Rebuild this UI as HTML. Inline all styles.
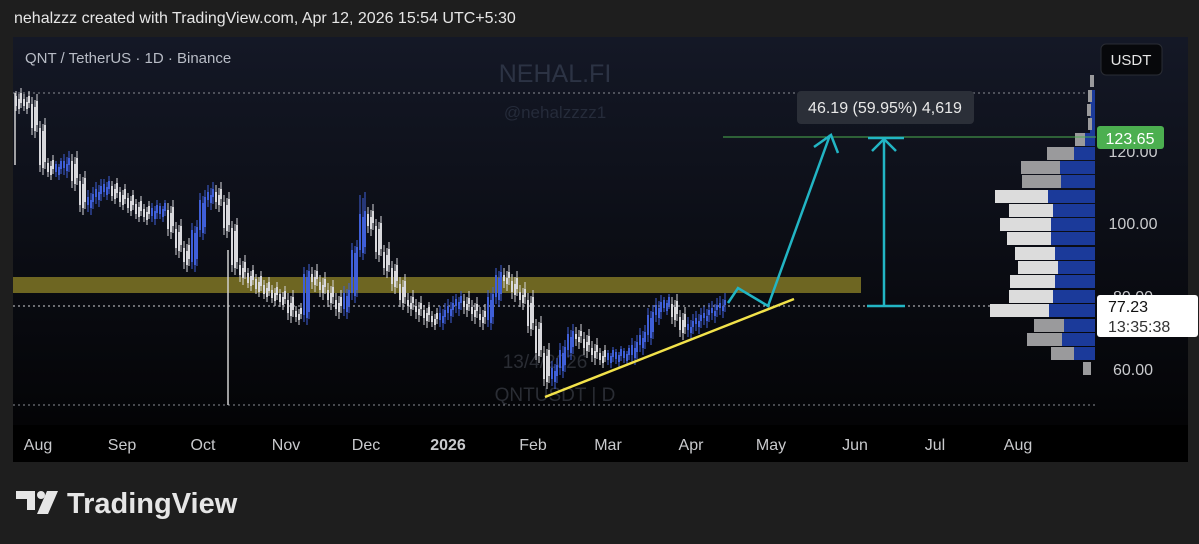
<!DOCTYPE html>
<html><head><meta charset="utf-8"><style>
html,body{margin:0;padding:0;background:#1e1e1e;width:1199px;height:544px;overflow:hidden;font-family:"Liberation Sans",sans-serif}
.hdr{position:absolute;left:14px;top:10px;color:#e6e6e6;font-size:16px;z-index:2}
svg{position:absolute;left:0;top:0}
</style></head><body>
<svg width="1199" height="544" xmlns="http://www.w3.org/2000/svg" xmlns:xlink="http://www.w3.org/1999/xlink">
<defs><linearGradient id="g" x1="0" y1="0" x2="0" y2="1"><stop offset="0" stop-color="#141826"/><stop offset="1" stop-color="#020203"/></linearGradient></defs>
<rect x="13" y="37" width="1175" height="425" fill="url(#g)"/>
<rect x="13" y="425" width="1175" height="37" fill="#000"/>
<text x="25" y="63" fill="#b8bcc6" font-size="15">QNT / TetherUS · 1D · Binance</text>
<text x="555" y="82" fill="#2c3344" font-size="25" text-anchor="middle">NEHAL.FI</text>
<text x="555" y="118" fill="#252b3a" font-size="17" text-anchor="middle">@nehalzzzz1</text>
<text x="545" y="368" fill="#2a2d34" font-size="19" text-anchor="middle">13/4/2026</text>
<text x="555" y="401" fill="#2a2d34" font-size="19" text-anchor="middle">QNTUSDT | D</text>
<line x1="13" y1="93" x2="1096" y2="93" stroke="#8a8d94" stroke-width="1" stroke-dasharray="2,3"/>
<line x1="13" y1="405" x2="1096" y2="405" stroke="#8a8d94" stroke-width="1" stroke-dasharray="2,3"/>
<line x1="13" y1="306" x2="1096" y2="306" stroke="#cfd0d4" stroke-width="1" stroke-dasharray="2,3"/>
<rect x="13" y="277" width="848" height="16" fill="#6e6622"/>
<line x1="228" y1="250" x2="228" y2="405" stroke="#d0d0d0" stroke-width="1.5"/>
<line x1="15" y1="93" x2="15" y2="165" stroke="#d0d0d0" stroke-width="1.5"/>
<g id="cd">
<path fill="none" stroke="#d8d8dc" stroke-width="1" d="M16 91V111 M24 94V111 M32 97V135 M40 121V172 M48 158V177 M72 154V188 M80 174V212 M112 181V201 M120 187V207 M128 193V213 M136 199V219 M144 204V222 M168 203V236 M176 222V255 M184 241V269 M216 185V209 M224 195V235 M232 221V272 M240 258V282 M248 268V288 M256 274V294 M264 280V299 M272 285V303 M280 289V307 M288 293V320 M296 306V322 M312 267V289 M320 275V297 M328 283V307 M336 293V316 M368 207V233 M376 219V259 M384 245V275 M392 261V291 M400 277V307 M408 293V313 M416 299V319 M424 305V325 M432 311V327 M464 294V314 M472 300V321 M480 307V327 M504 268V288 M512 274V299 M520 285V307 M528 293V333 M536 319V360 M544 346V386 M576 327V346 M584 332V355 M592 341V362 M600 348V365 M672 297V324 M680 310V337"/>
<path fill="none" stroke="#d8d8dc" stroke-width="2" d="M16 96V106 M24 99V106 M32 104V128 M40 128V165 M48 163V172 M72 161V181 M80 181V205 M112 186V196 M120 192V202 M128 198V208 M136 204V214 M144 209V217 M168 210V229 M176 229V248 M184 248V262 M216 192V202 M224 202V228 M232 228V265 M240 265V275 M248 273V283 M256 279V289 M264 285V294 M272 290V298 M280 294V302 M288 300V313 M296 311V317 M312 274V282 M320 282V290 M328 290V300 M336 300V309 M368 214V226 M376 226V252 M384 252V268 M392 268V284 M400 284V300 M408 300V306 M416 306V312 M424 310V318 M432 316V322 M464 301V307 M472 307V314 M480 314V320 M504 275V281 M512 281V292 M520 292V300 M528 300V326 M536 326V353 M544 353V379 M576 334V339 M584 339V348 M592 348V355 M600 353V360 M672 304V317 M680 317V330"/>
<path fill="none" stroke="#3f5fd8" stroke-width="1" d="M56 161V177 M64 154V175 M88 190V212 M96 182V204 M104 179V197 M152 203V222 M160 203V219 M192 223V269 M200 193V237 M208 185V207 M304 267V322 M344 286V316 M352 243V300 M360 195V257 M440 306V327 M448 299V320 M456 294V313 M488 290V327 M496 268V304 M552 361V386 M560 343V375 M568 327V357 M608 350V365 M616 349V364 M624 348V363 M632 338V362 M640 328V352 M648 308V342 M656 298V322 M664 297V312 M688 317V337 M696 311V331 M704 306V325 M712 301V320 M720 296V315"/>
<path fill="none" stroke="#3f5fd8" stroke-width="2" d="M56 164V172 M64 161V168 M88 197V205 M96 189V197 M104 184V192 M152 208V216 M160 206V214 M192 230V262 M200 200V230 M208 192V200 M304 274V315 M344 293V309 M352 250V293 M360 214V250 M440 313V320 M448 306V313 M456 299V306 M488 297V320 M496 275V297 M552 368V379 M560 350V368 M568 334V350 M608 353V360 M616 352V359 M624 351V358 M632 345V355 M640 335V345 M648 315V335 M656 305V315 M664 300V308 M688 324V330 M696 318V324 M704 313V318 M712 308V313 M720 303V308"/>
</g>
<use xlink:href="#cd" href="#cd" transform="translate(3,3)"/>
<use xlink:href="#cd" href="#cd" transform="translate(5,-3)"/>
<rect x="1090" y="90" width="5" height="50" fill="#1b3a9a"/>
<g fill="#1b3a9a">
<rect x="1074" y="147" width="21" height="13"/><rect x="1060" y="161" width="35" height="13"/><rect x="1061" y="175" width="34" height="13"/><rect x="1048" y="190" width="47" height="13"/><rect x="1053" y="204" width="42" height="13"/><rect x="1051" y="218" width="44" height="13"/><rect x="1051" y="232" width="44" height="13"/><rect x="1055" y="247" width="40" height="13"/><rect x="1058" y="261" width="37" height="13"/><rect x="1055" y="275" width="40" height="13"/><rect x="1053" y="290" width="42" height="13"/><rect x="1049" y="304" width="46" height="13"/><rect x="1064" y="319" width="31" height="13"/><rect x="1062" y="333" width="33" height="13"/><rect x="1074" y="347" width="21" height="13"/><rect x="1085" y="133" width="10" height="13"/></g>
<g fill="#9a9a9c">
<rect x="1075" y="133" width="10" height="13"/><rect x="1047" y="147" width="27" height="13"/><rect x="1021" y="161" width="39" height="13"/><rect x="1022" y="175" width="39" height="13"/><rect x="1034" y="319" width="30" height="13"/><rect x="1027" y="333" width="35" height="13"/><rect x="1051" y="347" width="23" height="13"/><rect x="1083" y="362" width="8" height="13"/>
<rect x="1090" y="75" width="4" height="12"/><rect x="1088" y="90" width="4" height="12"/><rect x="1087" y="104" width="4" height="12"/><rect x="1088" y="118" width="4" height="12"/></g>
<g fill="#dcdcdc">
<rect x="995" y="190" width="53" height="13"/><rect x="1009" y="204" width="44" height="13"/><rect x="1000" y="218" width="51" height="13"/><rect x="1007" y="232" width="44" height="13"/><rect x="1015" y="247" width="40" height="13"/><rect x="1018" y="261" width="40" height="13"/><rect x="1010" y="275" width="45" height="13"/><rect x="1009" y="290" width="44" height="13"/><rect x="990" y="304" width="59" height="13"/></g>
<line x1="723" y1="137" x2="1096" y2="137" stroke="#4caf50" stroke-width="1"/>
<polyline points="728,303 738,288 768,306 830,135" fill="none" stroke="#22b5c4" stroke-width="2.5"/>
<polyline points="814,147 831,135 838,153" fill="none" stroke="#22b5c4" stroke-width="2.5"/>
<line x1="884" y1="139" x2="884" y2="306" stroke="#22b5c4" stroke-width="2.5"/>
<line x1="867" y1="306" x2="905" y2="306" stroke="#22b5c4" stroke-width="2.5"/>
<line x1="868" y1="138" x2="904" y2="138" stroke="#22b5c4" stroke-width="2.5"/>
<polyline points="872,151 884,139 896,151" fill="none" stroke="#22b5c4" stroke-width="2.5"/>
<line x1="545" y1="397" x2="794" y2="299" stroke="#f2e24a" stroke-width="2.5"/>
<rect x="797" y="91" width="177" height="33" rx="4" fill="#2b2f38"/>
<text x="885" y="113" fill="#e8e8e8" font-size="16" text-anchor="middle">46.19 (59.95%) 4,619</text>
<rect x="1101" y="44" width="61" height="31" rx="5" fill="#07080b" stroke="#2a2d34"/>
<text x="1131" y="65" fill="#e6e6e6" font-size="15" text-anchor="middle">USDT</text>
<g fill="#c9cacd" font-size="16" text-anchor="middle">
<text x="1133" y="157">120.00</text><text x="1133" y="229">100.00</text><text x="1133" y="302">80.00</text><text x="1133" y="375">60.00</text></g>
<rect x="1097" y="126" width="67" height="23" rx="3" fill="#4caf50"/>
<text x="1130" y="144" fill="#fff" font-size="16" text-anchor="middle">123.65</text>
<rect x="1097" y="295" width="101" height="42" rx="3" fill="#fff"/>
<text x="1108" y="312" fill="#111" font-size="16">77.23</text>
<text x="1108" y="332" fill="#333" font-size="16">13:35:38</text>
<g fill="#c9cacd" font-size="16" text-anchor="middle">
<text x="38" y="450">Aug</text><text x="122" y="450">Sep</text><text x="203" y="450">Oct</text><text x="286" y="450">Nov</text><text x="366" y="450">Dec</text><text x="448" y="450" font-weight="bold">2026</text><text x="533" y="450">Feb</text><text x="608" y="450">Mar</text><text x="691" y="450">Apr</text><text x="771" y="450">May</text><text x="855" y="450">Jun</text><text x="935" y="450">Jul</text><text x="1018" y="450">Aug</text></g>
<g fill="#e6e6e6">
<path d="M16 491h19v19h-8v-11h-11z"/><circle cx="41" cy="495" r="4"/><path d="M47 491h11l-10 23h-11z"/>
</g>
<text x="67" y="513" fill="#e6e6e6" font-size="29" font-weight="bold">TradingView</text>
</svg>
<div class="hdr">nehalzzz created with TradingView.com, Apr 12, 2026 15:54 UTC+5:30</div>
</body></html>
